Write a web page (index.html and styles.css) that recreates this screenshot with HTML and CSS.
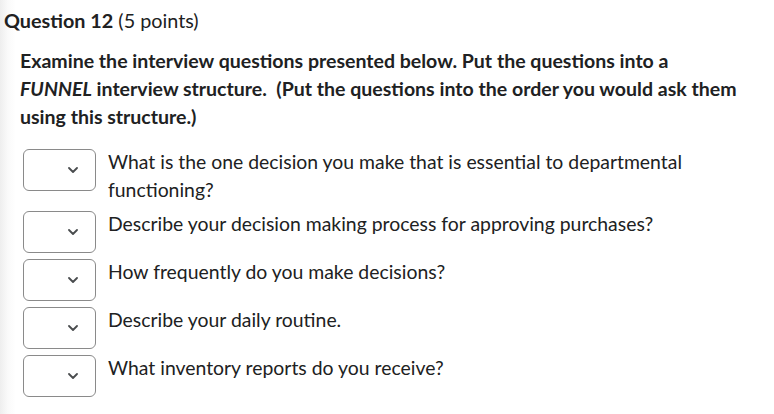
FILE: index.html
```html
<!DOCTYPE html>
<html>
<head>
<meta charset="utf-8">
<link rel="stylesheet" href="styles.css">
</head>
<body>
<div class="page">
  <h2 class="title"><strong>Question 12</strong> <span class="pts">(5 points)</span></h2>
  <div class="content">
    <p class="prompt">Examine the interview questions presented below. Put the questions into a <em>FUNNEL</em> interview structure.&nbsp; (Put the questions into the order you would ask them using this structure.)</p>
    <div class="rows">
      <div class="row">
        <div class="select"><svg class="chev" width="10" height="6" viewBox="0 0 10 6"><path d="M1 1 L5 5 L9 1" fill="none" stroke="#494c4e" stroke-width="1.8" stroke-linecap="round" stroke-linejoin="round"/></svg></div>
        <div class="label">What is the one decision you make that is essential to departmental functioning?</div>
      </div>
      <div class="row">
        <div class="select"><svg class="chev" width="10" height="6" viewBox="0 0 10 6"><path d="M1 1 L5 5 L9 1" fill="none" stroke="#494c4e" stroke-width="1.8" stroke-linecap="round" stroke-linejoin="round"/></svg></div>
        <div class="label">Describe your decision making process for approving purchases?</div>
      </div>
      <div class="row">
        <div class="select"><svg class="chev" width="10" height="6" viewBox="0 0 10 6"><path d="M1 1 L5 5 L9 1" fill="none" stroke="#494c4e" stroke-width="1.8" stroke-linecap="round" stroke-linejoin="round"/></svg></div>
        <div class="label">How frequently do you make decisions?</div>
      </div>
      <div class="row">
        <div class="select"><svg class="chev" width="10" height="6" viewBox="0 0 10 6"><path d="M1 1 L5 5 L9 1" fill="none" stroke="#494c4e" stroke-width="1.8" stroke-linecap="round" stroke-linejoin="round"/></svg></div>
        <div class="label">Describe your daily routine.</div>
      </div>
      <div class="row">
        <div class="select"><svg class="chev" width="10" height="6" viewBox="0 0 10 6"><path d="M1 1 L5 5 L9 1" fill="none" stroke="#494c4e" stroke-width="1.8" stroke-linecap="round" stroke-linejoin="round"/></svg></div>
        <div class="label">What inventory reports do you receive?</div>
      </div>
    </div>
  </div>
</div>
</body>
</html>
```
FILE: styles.css
```css
html, body {
  margin: 0;
  padding: 0;
  background: #fff;
}
body {
  font-family: Lato, "Open Sans", sans-serif;
  color: #202122;
  background: linear-gradient(to right, #eeeeee 0px, #fafafa 8px, #ffffff 16px);
  height: 414px;
}
.page {
  padding: 6px 0 0 4px;
}
.title {
  margin: 0;
  font-size: 19.8px;
  line-height: 28px;
  font-weight: 400;
}
.title strong {
  font-weight: 700;
}
.content {
  padding-left: 16px;
}
.prompt {
  margin: 13px 0 18px 0;
  max-width: 720px;
  font-size: 19.55px;
  line-height: 28px;
  font-weight: 700;
}
.prompt em {
  font-style: italic;
}
.rows {
  display: flex;
  flex-direction: column;
  gap: 6px;
  padding-left: 3px;
}
.row {
  display: flex;
  align-items: flex-start;
  gap: 12px;
}
.select {
  flex: 0 0 auto;
  width: 73px;
  height: 42px;
  border: 1px solid #8a8a8a;
  border-radius: 6px;
  background: #fff;
  display: flex;
  align-items: center;
  justify-content: flex-end;
  padding-right: 17px;
  box-sizing: border-box;
}
.label {
  font-size: 19.4px;
  line-height: 28px;
  font-weight: 400;
  max-width: 590px;
  margin-top: -1px;
  margin-bottom: 1px;
}
```
